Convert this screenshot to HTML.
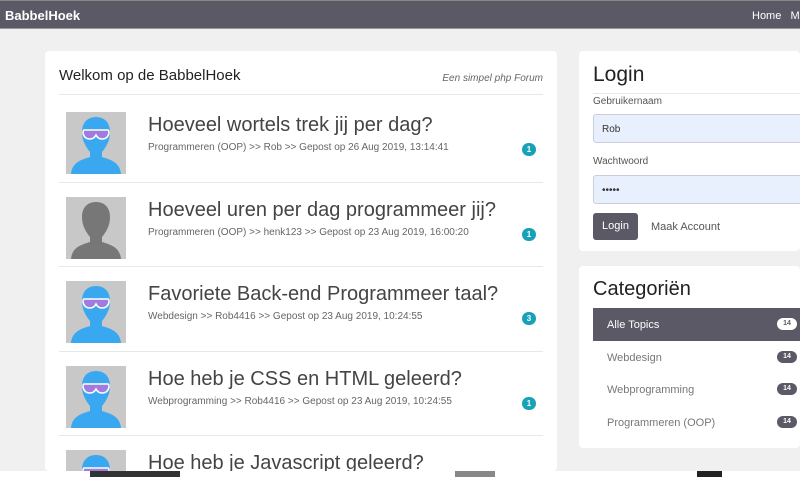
<!DOCTYPE html>
<html><head><meta charset="utf-8"><style>
*{box-sizing:border-box;margin:0;padding:0}
body{width:800px;height:477px;overflow:hidden;background:#f0f0f0;font-family:"Liberation Sans",sans-serif;position:relative;color:#333}
.nav{position:absolute;left:0;top:0;width:800px;height:29px;background:#5b5966;border-top:1px solid #888;border-bottom:1px solid #999}
.nav .brand{position:absolute;left:5px;top:7px;color:#fff;font-size:13px;font-weight:bold}
.nav .links{position:absolute;left:752px;top:9px;color:#fff;font-size:11px;white-space:nowrap}
.card{position:absolute;background:#fff;border-radius:4px}
.abs{position:absolute;white-space:nowrap}
.hr{position:absolute;height:1px;background:#e8e8e8}
.av{position:absolute;left:21px;width:60px;height:62px;background:#c8c8c8;overflow:hidden}
.t{position:absolute;left:103px;font-size:20px;color:#444}
.m{position:absolute;left:103px;font-size:10px;color:#666}
.b{position:absolute;left:477px;width:14px;height:13px;border-radius:7px;background:#17a2b8;color:#fff;font-size:8px;font-weight:bold;text-align:center;line-height:13px}
.inp{position:absolute;left:14px;width:220px;height:29px;background:#e8f0fe;border:1px solid #ccd;border-radius:3px;font-size:10px;padding:9px 8px}
.cat{position:absolute;left:14px;width:220px;height:33px;font-size:11px;color:#777;padding:11px 14px}
.cb{position:absolute;left:184px;top:10px;width:20px;height:12px;border-radius:6px;background:#5b5966;color:#fff;font-size:7px;font-weight:bold;text-align:center;line-height:12px}
</style></head><body>
<div class="nav"><div class="brand">BabbelHoek</div><div class="links">Home &nbsp; M</div></div>

<div class="card" style="left:45px;top:51px;width:512px;height:420px;overflow:hidden">
<div class="abs" style="left:14px;top:16px;font-size:15px;color:#222">Welkom op de BabbelHoek</div>
<div class="abs" style="right:14px;top:22px;font-size:10px;font-style:italic;color:#666">Een simpel php Forum</div>
<div class="hr" style="left:14px;width:484px;top:43px"></div>

<svg width="0" height="0" style="position:absolute"><defs>
<symbol id="blue" viewBox="0 0 60 62"><path d="M30 5c-9 0-14 6-14 15 0 9 4 15 8 20v5c-10 3-18 6-19 17h50c-1-11-9-14-19-17v-5c4-5 8-11 8-20 0-9-5-15-14-15z" fill="#3aa8f0"/><path d="M18 18h24c1 0 1 2 1 3-1 5-4 6-7 6-3 0-5-2-6-4-1 2-3 4-6 4-3 0-6-1-7-6 0-1 0-3 1-3z" fill="#a07ce0" stroke="#fff" stroke-width="1.5"/></symbol>
<symbol id="gray" viewBox="0 0 60 62"><path d="M30 5c-9 0-14 6-14 15 0 9 4 15 8 20v5c-10 3-18 6-19 17h50c-1-11-9-14-19-17v-5c4-5 8-11 8-20 0-9-5-15-14-15z" fill="#777"/></symbol>
</defs></svg>

<div style="position:absolute;left:0;top:61px;width:512px;height:70px">
<svg class="av" viewBox="0 0 60 62" style="top:0"><rect width="60" height="62" fill="#c8c8c8"/><use href="#blue"/></svg>
<div class="t" style="top:2px">Hoeveel wortels trek jij per dag?</div>
<div class="m" style="top:30px">Programmeren (OOP) &gt;&gt; Rob &gt;&gt; Gepost op 26 Aug 2019, 13:14:41</div>
<div class="b" style="top:31px">1</div></div>
<div class="hr" style="left:14px;width:484px;top:131px"></div>

<div style="position:absolute;left:0;top:146px;width:512px;height:70px">
<svg class="av" viewBox="0 0 60 62" style="top:0"><rect width="60" height="62" fill="#c8c8c8"/><use href="#gray"/></svg>
<div class="t" style="top:2px">Hoeveel uren per dag programmeer jij?</div>
<div class="m" style="top:30px">Programmeren (OOP) &gt;&gt; henk123 &gt;&gt; Gepost op 23 Aug 2019, 16:00:20</div>
<div class="b" style="top:31px">1</div></div>
<div class="hr" style="left:14px;width:484px;top:215px"></div>

<div style="position:absolute;left:0;top:230px;width:512px;height:70px">
<svg class="av" viewBox="0 0 60 62" style="top:0"><rect width="60" height="62" fill="#c8c8c8"/><use href="#blue"/></svg>
<div class="t" style="top:2px">Favoriete Back-end Programmeer taal?</div>
<div class="m" style="top:30px">Webdesign &gt;&gt; Rob4416 &gt;&gt; Gepost op 23 Aug 2019, 10:24:55</div>
<div class="b" style="top:31px">3</div></div>
<div class="hr" style="left:14px;width:484px;top:300px"></div>

<div style="position:absolute;left:0;top:315px;width:512px;height:70px">
<svg class="av" viewBox="0 0 60 62" style="top:0"><rect width="60" height="62" fill="#c8c8c8"/><use href="#blue"/></svg>
<div class="t" style="top:2px">Hoe heb je CSS en HTML geleerd?</div>
<div class="m" style="top:30px">Webprogramming &gt;&gt; Rob4416 &gt;&gt; Gepost op 23 Aug 2019, 10:24:55</div>
<div class="b" style="top:31px">1</div></div>
<div class="hr" style="left:14px;width:484px;top:384px"></div>

<div style="position:absolute;left:0;top:399px;width:512px;height:21px;overflow:hidden">
<svg class="av" viewBox="0 0 60 62" style="top:0"><rect width="60" height="62" fill="#c8c8c8"/><use href="#blue"/></svg>
<div class="t" style="top:2px">Hoe heb je Javascript geleerd?</div></div>
</div>

<div class="card" style="left:579px;top:51px;width:221px;height:200px;overflow:hidden">
<div class="abs" style="left:14px;top:12px;font-size:21px;color:#222">Login</div>
<div class="hr" style="left:14px;width:220px;top:42px"></div>
<div class="abs" style="left:14px;top:45px;font-size:10px;color:#555">Gebruikernaam</div>
<div class="inp" style="top:63px">Rob</div>
<div class="abs" style="left:14px;top:105px;font-size:10px;color:#555">Wachtwoord</div>
<div class="inp" style="top:124px">•••••</div>
<div class="abs" style="left:14px;top:162px;width:45px;height:27px;background:#5b5966;color:#fff;font-size:11px;border-radius:3px;text-align:center;line-height:27px">Login</div>
<div class="abs" style="left:72px;top:170px;font-size:11px;color:#555">Maak Account</div>
</div>

<div class="card" style="left:579px;top:266px;width:221px;height:182px;overflow:hidden">
<div class="abs" style="left:14px;top:12px;font-size:20px;color:#222">Categoriën</div>
<div class="cat" style="top:42px;background:#5b5966;color:#fff">Alle Topics<div class="cb" style="background:#fff;color:#5b5966">14</div></div>
<div class="cat" style="top:75px">Webdesign<div class="cb">14</div></div>
<div class="cat" style="top:107px">Webprogramming<div class="cb">14</div></div>
<div class="cat" style="top:140px">Programmeren (OOP)<div class="cb">14</div></div>
</div>

<div style="position:absolute;left:0;top:471px;width:800px;height:6px;background:#fff"></div>
<div style="position:absolute;left:90px;top:471px;width:90px;height:6px;background:#333"></div>
<div style="position:absolute;left:455px;top:471px;width:40px;height:6px;background:#888"></div>
<div style="position:absolute;left:697px;top:471px;width:25px;height:6px;background:#222"></div>
</body></html>
